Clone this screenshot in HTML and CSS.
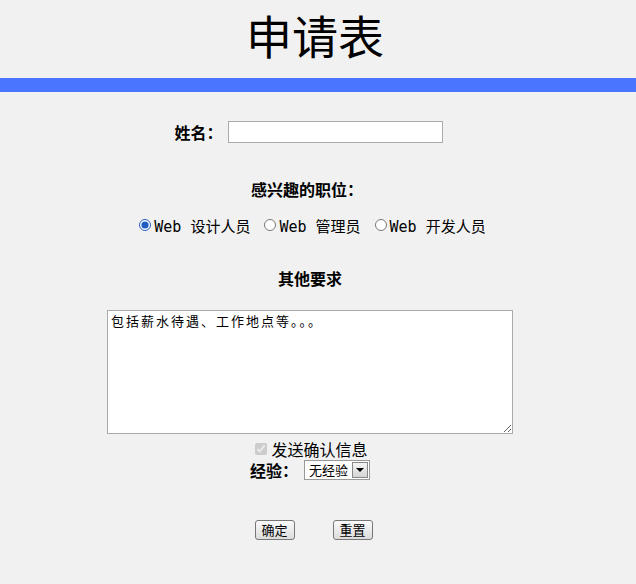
FILE: index.html
```html
<!DOCTYPE html>
<html>
	<head>
	<meta charset='utf-8'>
	<title>申请表</title>
	<link rel="stylesheet" href="styles.css">
	</head>
	<body>
		<h1 class='title'>申请表</h1>
		<div class='bar'></div>
		<form class='form'>
			<div class='row name-row'>
				<span class='label'>姓名：</span><input type='text' class='text-input'>
			</div>
			<div class='row heading job'>感兴趣的职位：</div>
			<div class='row radio-row'>
				<label class='opt'><input type='radio' name='job' checked>Web 设计人员</label>
				<label class='opt'><input type='radio' name='job'>Web 管理员</label>
				<label class='opt'><input type='radio' name='job'>Web 开发人员</label>
			</div>
			<div class='row heading other'>其他要求</div>
			<div class='row area-row'>
				<textarea class='area'>包括薪水待遇、工作地点等。。。</textarea>
			</div>
			<div class='row check-row'>
				<label><input type='checkbox' checked disabled>发送确认信息</label>
			</div>
			<div class='row exp-row'>
				<span class='label'>经验：</span>
				<span class='sel-wrap'>
					<select class='sel'><option>无经验</option></select>
					<span class='sel-arrow'></span>
				</span>
			</div>
			<div class='row button-row'>
				<button type='submit' class='btn'>确定</button>
				<button type='reset' class='btn'>重置</button>
			</div>
		</form>
	</body>
</html>
```

FILE: styles.css
```css
* {
	box-sizing: border-box;
}

body {
	margin: 0;
	background-color: #f1f1f1;
	font-family: 'Noto Sans CJK SC', 'DejaVu Sans', sans-serif;
	font-size: 16px;
	color: #000;
}

.title {
	margin: 0;
	padding-top: 8px;
	padding-right: 6px;
	height: 78px;
	text-align: center;
	font-size: 46px;
	font-weight: normal;
	line-height: 52px;
}

.bar {
	height: 14px;
	background-color: #4a75ff;
}

.form {
	display: flex;
	flex-direction: column;
	align-items: center;
	padding-right: 16px;
}

.row {
	display: flex;
	align-items: center;
	justify-content: center;
}

.label {
	font-weight: bold;
	font-size: 16px;
}

.name-row {
	margin-top: 29px;
	height: 22px;
	padding-right: 3px;
}

.name-row .label {
	margin-right: 5px;
}

.text-input {
	width: 215px;
	height: 22px;
	border: 1px solid #aaa;
	background: #fff;
	margin: 0;
}

.heading {
	font-weight: bold;
	font-size: 16px;
	height: 22px;
}

.job {
	margin-top: 35px;
	padding-right: 6px;
}

.radio-row {
	margin-top: 15px;
	height: 20px;
	gap: 14px;
	padding-left: 5px;
	font-family: 'DejaVu Sans Mono', 'Noto Sans CJK SC', monospace;
	font-size: 15px;
}

.opt {
	display: flex;
	align-items: center;
	white-space: pre;
}

.opt input {
	margin: 0 3px 0 0;
	width: 12px;
	height: 12px;
	accent-color: #1f5fc4;
}

.other {
	margin-top: 32px;
}

.area-row {
	margin-top: 21px;
}

.area {
	width: 406px;
	height: 124px;
	margin: 0;
	border: 1px solid #aaa;
	background: #fff;
	padding: 2px 3px;
	font-family: 'Noto Sans CJK SC', sans-serif;
	font-size: 13px;
	line-height: 16px;
	letter-spacing: 2px;
	resize: both;
}

.check-row {
	height: 20px;
	margin-top: 5px;
	padding-left: 3px;
	font-size: 16px;
}

.check-row label {
	display: flex;
	align-items: center;
}

.check-row input {
	margin: 0 4px 0 0;
	width: 12px;
	height: 12px;
}

.exp-row {
	height: 22px;
}

.exp-row .label {
	margin-right: 6px;
}

.sel-wrap {
	position: relative;
	display: block;
	width: 66px;
	height: 20px;
}

.sel {
	display: block;
	appearance: none;
	width: 66px;
	height: 20px;
	font-size: 13px;
	line-height: 18px;
	font-family: 'Noto Sans CJK SC', sans-serif;
	border: 1px solid #999;
	background: #fff;
	margin: 0;
	padding: 0 0 0 4px;
	color: #000;
}

.sel-arrow {
	position: absolute;
	top: 2px;
	right: 2px;
	width: 16px;
	height: 16px;
	background: linear-gradient(#f4f4f4, #d4d4d4);
	border: 1px solid #888;
	pointer-events: none;
}

.sel-arrow::after {
	content: '';
	position: absolute;
	left: 3px;
	top: 5px;
	border-left: 4px solid transparent;
	border-right: 4px solid transparent;
	border-top: 4px solid #000;
}

.button-row {
	margin-top: 39px;
	gap: 38px;
	padding-left: 7px;
}

.btn {
	width: 40px;
	height: 20px;
	padding: 0;
	font-size: 13px;
	font-family: 'Noto Sans CJK SC', sans-serif;
	border: 1px solid #777;
	border-radius: 3px;
	background: linear-gradient(#fafafa, #dcdcdc);
	line-height: 18px;
	color: #000;
}
```
